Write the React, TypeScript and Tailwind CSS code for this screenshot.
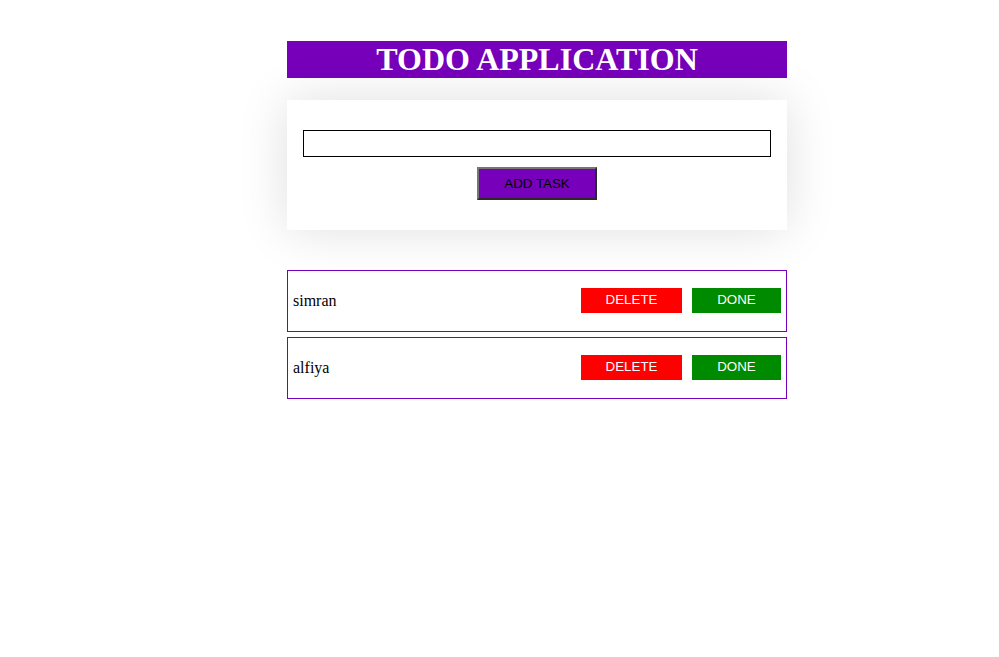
import React, { useState } from "react";

const App: React.FC = () => {
  const [tasks, setTasks] = useState<string[]>(["simran", "alfiya"]);
  const [text, setText] = useState("");

  return (
    <div className="min-h-[657px] bg-white pt-[41px] font-['Liberation_Serif',serif]">
      <div className="ml-[287px] w-[500px]">
        {/* Header */}
        <h1 className="h-[37px] bg-[#7700bb] text-center text-[32px] font-bold leading-[37px] text-white">
          TODO APPLICATION
        </h1>

        {/* Form card */}
        <div className="mt-[22px] flex flex-col items-center bg-white px-4 pt-[30px] pb-[30px] shadow-[0_0_50px_rgba(0,0,0,0.13)]">
          <input
            value={text}
            onChange={(e) => setText(e.target.value)}
            className="h-[27px] w-full border border-black bg-white px-1 outline-none"
          />
          <button
            onClick={() => {
              if (text.trim()) setTasks([...tasks, text.trim()]);
              setText("");
            }}
            className="mt-[10px] h-[33px] w-[120px] border-2 border-t-[#767676] border-l-[#767676] border-r-[#2a2a2a] border-b-[#2a2a2a] bg-[#7700bb] font-['Liberation_Sans',sans-serif] text-[13.33px] text-black"
          >
            ADD TASK
          </button>
        </div>

        {/* Task list */}
        <div className="mt-[40px] flex flex-col gap-[5px]">
          {tasks.map((t, idx) => (
            <div
              key={idx}
              className="flex h-[62px] items-center justify-between border border-[#7700bb] pl-[5px] pr-[5px]"
            >
              <span className="text-[16px] text-black">{t}</span>
              <div className="mb-[2px] flex gap-[10px] font-['Liberation_Sans',sans-serif] text-[13.33px] text-white">
                <button
                  onClick={() => setTasks(tasks.filter((_, i) => i !== idx))}
                  className="h-[25px] w-[101px] bg-[#ff0000]"
                >
                  DELETE
                </button>
                <button className="h-[25px] w-[89px] bg-[#008a00]">DONE</button>
              </div>
            </div>
          ))}
        </div>
      </div>
    </div>
  );
};

export default App;
